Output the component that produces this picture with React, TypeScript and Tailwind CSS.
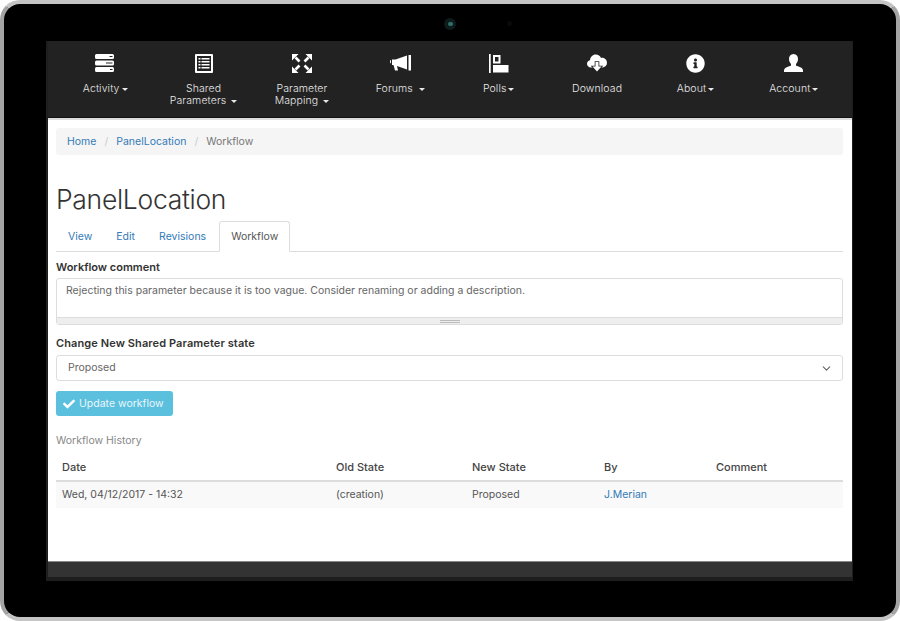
import React from "react";
import { FaInfoCircle, FaCheck } from "react-icons/fa";
import { ChevronDown } from "lucide-react";

const Caret = ({ gap = "ml-[2px]" }: { gap?: string }) => (
  <span className={`inline-block align-middle ${gap} w-0 h-0 border-x-[3.5px] border-x-transparent border-t-[3.5px] border-t-[#e8e8e8]`} />
);

const Server = () => (
  <svg width="20" height="18" viewBox="0 0 20 18" fill="#fff">
    <path fillRule="evenodd" d="M1.500 0h16A1.500 1.500 0 0 1 19 1.500v2A1.500 1.500 0 0 1 17.500 5h-16A1.500 1.500 0 0 1 0 3.500v-2A1.500 1.500 0 0 1 1.500 0zM14.500 2v1h3V2z" />
    <path fillRule="evenodd" d="M1.500 6.500h16A1.500 1.500 0 0 1 19 8v2a1.500 1.500 0 0 1-1.500 1.500h-16A1.500 1.500 0 0 1 0 10V8a1.500 1.500 0 0 1 1.500-1.500zM11 8.500v1h6.500v-1z" />
    <path fillRule="evenodd" d="M1.500 13h16a1.500 1.500 0 0 1 1.500 1.500v2a1.500 1.500 0 0 1-1.500 1.500h-16A1.500 1.500 0 0 1 0 16.500v-2A1.500 1.500 0 0 1 1.500 13zM15 15v1h2.500v-1z" />
  </svg>
);

const ListAlt = () => (
  <svg width="18" height="19" viewBox="0 0 18 19" fill="#fff">
    <path fillRule="evenodd" d="M1 0h16a1 1 0 0 1 1 1v17a1 1 0 0 1-1 1H1a1 1 0 0 1-1-1V1a1 1 0 0 1 1-1zm1 2v15h14V2z" />
    <path d="M3.500 4h2v1.500h-2zM6.500 4h8v1.500h-8zM3.500 7h2v1.500h-2zM6.500 7h8v1.500h-8zM3.500 10h2v1.500h-2zM6.500 10h8v1.500h-8zM3.500 13h2v1.500h-2zM6.500 13h8v1.500h-8z" />
  </svg>
);

const Expand = () => (
  <svg width="20" height="19" viewBox="0 0 20 19" fill="#fff" stroke="none">
    <path d="M0 0h6.500L0 6.500zM20 0h-6.500L20 6.500zM0 19h6.500L0 12.500zM20 19h-6.500L20 12.500z" />
    <path d="M3.500 3.500l4 4M16.500 3.500l-4 4M3.500 15.500l4-4M16.500 15.500l-4-4" stroke="#fff" strokeWidth="2.600" />
  </svg>
);

const Bullhorn = () => (
  <svg width="21" height="16" viewBox="0 0 21 16" fill="#fff">
    <path d="M0 6.500C0 5.500.5 5 1 5v3.500c-.5 0-1-.8-1-2zM2 4.500h3.500L17 .5v14l-10-3.500L8 15.500H5L3.500 10H2z" />
    <path d="M18.500 0H21v15.500h-2.500z" />
  </svg>
);

const Polls = () => (
  <svg width="20" height="19" viewBox="0 0 20 19" fill="#fff">
    <path fillRule="evenodd" d="M0 0h1.700v19H0zM4 1h7.500v8.500H4zM6 3v4.500h3.500V3zM4 11h15.500v7.500H4z" />
  </svg>
);

const CloudDown = () => (
  <svg width="20" height="18" viewBox="0 0 20 18" fill="#fff">
    <path d="M4 13.500C1.500 13.500 0 11.800 0 9.800c0-1.800 1.200-3.300 3-3.600C3.300 3 5.500.5 8.800.5c2.400 0 4.400 1.400 5.200 3.400 3-.5 6 1.700 6 4.900 0 2.700-2 4.700-4.500 4.700z" />
    <path d="M8.500 8h3v4.500h3L10 17.500 5.500 12.500h3z" stroke="#222" strokeWidth="1.600" paintOrder="stroke" />
  </svg>
);

const User = () => (
  <svg width="19" height="18" viewBox="0 0 19 18" fill="#fff">
    <path d="M9.500 0c3 0 4.500 2.200 4.500 5 0 2-1 4-2 5v1.500c2 1 7 2 7 5V18H0v-1.500c0-3 5-4 7-5V10c-1-1-2-3-2-5 0-2.800 1.500-5 4.500-5z" />
  </svg>
);

type Item = { icon: React.ReactNode; lines: React.ReactNode[] };

const items: Item[] = [
  { icon: <Server />, lines: [<>Activity<Caret /></>] },
  { icon: <ListAlt />, lines: ["Shared", <>Parameters<Caret gap="ml-[5px]" /></>] },
  { icon: <Expand />, lines: ["Parameter", <>Mapping<Caret gap="ml-[5px]" /></>] },
  { icon: <Bullhorn />, lines: [<>Forums<Caret gap="ml-[6px]" /></>] },
  { icon: <Polls />, lines: [<>Polls<Caret /></>] },
  { icon: <CloudDown />, lines: ["Download"] },
  { icon: <FaInfoCircle size={19} color="#fff" />, lines: [<>About<Caret /></>] },
  { icon: <User />, lines: [<>Account<Caret /></>] },
];

const font = "font-['Inter','Liberation_Sans',sans-serif]";

const Th = ({ className, children }: { className: string; children: React.ReactNode }) => (
  <th className={`${className} text-left font-medium px-[6px] pb-[5px] pt-[3px] text-[11px] leading-4 text-[#444]`}>{children}</th>
);

export default function App() {
  return (
    <div className={`${font} w-[900px] h-[621px] bg-white overflow-hidden`}>
      <div className="w-full h-full bg-black rounded-[20px] border-x-[4px] border-y-[4px] border-x-[#a4a4a4] border-y-[#c4c4c4] flex flex-col relative">
        <div className="absolute left-[440px] top-[14px] w-[12px] h-[12px] rounded-full bg-[#0e1a1c] flex items-center justify-center">
          <div className="w-[5px] h-[4px] rounded-full bg-[#2f6f6a]" />
        </div>
        <div className="absolute left-[503px] top-[17px] w-[5px] h-[5px] rounded-full bg-[#0a0a0a]" />

        <div className="mt-[37px] ml-[42px] w-[807px] h-[540px] flex flex-col bg-white border-l-[2px] border-r-[1px] border-b-[4px] border-[#1e1e1e]">
          <nav className="h-[77px] bg-[#222] pl-[8px] pr-[9px] pt-[10px] grid grid-cols-8 shrink-0 border-b-[1px] border-[#111]">
            {items.map((it, i) => (
              <div key={i} className="flex flex-col items-center text-center">
                <div className="h-[24px] flex items-center justify-center">{it.icon}</div>
                <div className="mt-[8px] text-[10.5px] leading-[12px] font-light text-[#e8e8e8] tracking-[0.1px]">
                  {it.lines.map((l, j) => (
                    <div key={j} className="whitespace-nowrap">{l}</div>
                  ))}
                </div>
              </div>
            ))}
          </nav>
          <div className="h-[2px] bg-[#dcdcdc] shrink-0" />

          <main className="flex-1 pl-[8px] pr-[9px] pt-[8px] flex flex-col">
            <div className="h-[27px] bg-[#f5f5f5] rounded-[3px] px-[11px] flex items-center text-[10.5px] text-[#777] shrink-0">
              <span className="text-[#337ab7]">Home</span>
              <span className="mx-[8px] text-[#ccc]">/</span>
              <span className="text-[#337ab7]">PanelLocation</span>
              <span className="mx-[8px] text-[#ccc]">/</span>
              <span>Workflow</span>
            </div>

            <h1 className="mt-[27px] text-[26.5px] leading-[34px] font-light text-[#333] tracking-[-0.3px]">PanelLocation</h1>

            <div className="mt-[5px] h-[31px] flex items-end border-b border-[#ddd] text-[10.5px] text-[#337ab7] shrink-0">
              <span className="h-[31px] leading-[34px] px-[12px]">View</span>
              <span className="h-[31px] leading-[34px] px-[12px]">Edit</span>
              <span className="h-[31px] leading-[34px] px-[12px]">Revisions</span>
              <span className="h-[31px] leading-[30px] ml-[1px] px-[11px] -mb-px text-[#555] bg-white border border-[#ddd] border-b-white rounded-t-[3px]">Workflow</span>
            </div>

            <label className="mt-[8px] text-[11px] leading-[14px] font-semibold text-[#333]">Workflow comment</label>
            <div className="mt-[4px] h-[47px] flex flex-col border border-[#ddd] rounded-[3px] shrink-0">
              <div className="flex-1 px-[9px] py-[5px] text-[10.5px] leading-[14px] text-[#666] border-b border-[#ddd]">
                Rejecting this parameter because it is too vague. Consider renaming or adding a description.
              </div>
              <div className="h-[6px] bg-[#eee] flex items-center justify-center shrink-0">
                <div className="w-[20px] h-[3px] border-y border-[#bbb]" />
              </div>
            </div>

            <label className="mt-[11px] text-[11px] leading-[14px] font-semibold text-[#333] tracking-[0.1px]">Change New Shared Parameter state</label>
            <div className="mt-[5px] h-[26px] flex items-center justify-between border border-[#ddd] rounded-[3px] pl-[11px] pr-[9px] text-[10.5px] text-[#666] shrink-0">
              <span>Proposed</span>
              <ChevronDown size={13} color="#666" />
            </div>

            <div className="mt-[10px] w-[117px] h-[25px] bg-[#5bc0de] rounded-[3px] flex items-center pl-[7px] text-[10.5px] text-[#e8f6fb] shrink-0">
              <FaCheck size={12} color="#fff" />
              <span className="ml-[4px]">Update workflow</span>
            </div>

            <div className="mt-[18px] text-[10.5px] leading-[14px] text-[#888]">Workflow History</div>

            <table className="mt-[8px] w-full border-collapse table-fixed">
              <thead>
                <tr className="border-b-2 border-[#ddd]">
                  <Th className="w-[274px]">Date</Th>
                  <Th className="w-[136px]">Old State</Th>
                  <Th className="w-[132px]">New State</Th>
                  <Th className="w-[112px]">By</Th>
                  <Th className="">Comment</Th>
                </tr>
              </thead>
              <tbody>
                <tr className="bg-[#f9f9f9] text-[10.5px] text-[#555] h-[27px]">
                  <td className="px-[6px]">Wed, 04/12/2017 - 14:32</td>
                  <td className="px-[6px]">(creation)</td>
                  <td className="px-[6px]">Proposed</td>
                  <td className="px-[6px] text-[#337ab7]">J.Merian</td>
                  <td className="px-[6px]"></td>
                </tr>
              </tbody>
            </table>
          </main>

          <footer className="h-[16px] bg-[#333] border-t border-[#888] shrink-0" />
        </div>
      </div>
    </div>
  );
}
